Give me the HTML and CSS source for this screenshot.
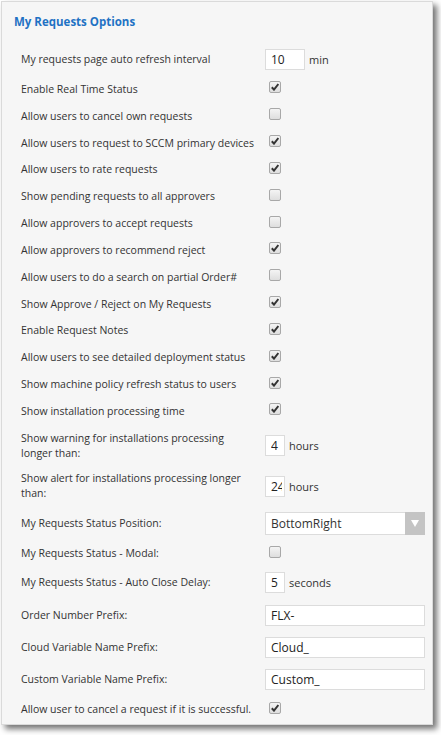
FILE: index.html
```html
<!DOCTYPE html>
<html>
<head>
<meta charset="utf-8">
<link rel="stylesheet" href="styles.css">
</head>
<body>
<div class="panel">
  <div class="title">My Requests Options</div>
  <div class="rows">
    <div class="row r1"><span class="label">My requests page auto refresh interval</span><span class="ctrl"><span class="input w40">10</span><span class="unit">min</span></span></div>
    <div class="row r"><span class="label">Enable Real Time Status</span><span class="ctrl"><span class="cb on"></span></span></div>
    <div class="row r"><span class="label">Allow users to cancel own requests</span><span class="ctrl"><span class="cb"></span></span></div>
    <div class="row r"><span class="label">Allow users to request to SCCM primary devices</span><span class="ctrl"><span class="cb on"></span></span></div>
    <div class="row r"><span class="label">Allow users to rate requests</span><span class="ctrl"><span class="cb on"></span></span></div>
    <div class="row r"><span class="label">Show pending requests to all approvers</span><span class="ctrl"><span class="cb"></span></span></div>
    <div class="row r"><span class="label">Allow approvers to accept requests</span><span class="ctrl"><span class="cb"></span></span></div>
    <div class="row r"><span class="label">Allow approvers to recommend reject</span><span class="ctrl"><span class="cb on"></span></span></div>
    <div class="row r"><span class="label">Allow users to do a search on partial Order#</span><span class="ctrl"><span class="cb"></span></span></div>
    <div class="row r"><span class="label">Show Approve / Reject on My Requests</span><span class="ctrl"><span class="cb on"></span></span></div>
    <div class="row r"><span class="label">Enable Request Notes</span><span class="ctrl"><span class="cb on"></span></span></div>
    <div class="row r"><span class="label">Allow users to see detailed deployment status</span><span class="ctrl"><span class="cb on"></span></span></div>
    <div class="row r"><span class="label">Show machine policy refresh status to users</span><span class="ctrl"><span class="cb on"></span></span></div>
    <div class="row r"><span class="label">Show installation processing time</span><span class="ctrl"><span class="cb on"></span></span></div>
    <div class="row r-warn"><span class="label two">Show warning for installations processing longer than:</span><span class="ctrl"><span class="input w20"><span class="clip">4</span></span><span class="unit">hours</span></span></div>
    <div class="row r-alert"><span class="label two">Show alert for installations processing longer than:</span><span class="ctrl"><span class="input w20"><span class="clip">24</span></span><span class="unit">hours</span></span></div>
    <div class="row r-pos"><span class="label">My Requests Status Position:</span><span class="ctrl"><span class="select"><span class="sel-text">BottomRight</span><span class="sel-arrow"><svg width="8" height="7" viewBox="0 0 8 7"><path d="M0 0H8L4 7Z" fill="#fff"/></svg></span></span></span></div>
    <div class="row r-modal"><span class="label">My Requests Status - Modal:</span><span class="ctrl"><span class="cb"></span></span></div>
    <div class="row r-close"><span class="label">My Requests Status - Auto Close Delay:</span><span class="ctrl"><span class="input w20"><span class="clip">5</span></span><span class="unit">seconds</span></span></div>
    <div class="row r-order"><span class="label">Order Number Prefix:</span><span class="ctrl"><span class="input wide">FLX-</span></span></div>
    <div class="row r-cloud"><span class="label">Cloud Variable Name Prefix:</span><span class="ctrl"><span class="input wide">Cloud_</span></span></div>
    <div class="row r-custom"><span class="label">Custom Variable Name Prefix:</span><span class="ctrl"><span class="input wide">Custom_</span></span></div>
    <div class="row r-allow"><span class="label">Allow user to cancel a request if it is successful.</span><span class="ctrl"><span class="cb on"></span></span></div>
  </div>
</div>
</body>
</html>
```
FILE: styles.css
```css
html, body {
  margin: 0;
  padding: 0;
  background: #ffffff;
}
body {
  font-family: "Open Sans", "Noto Sans", sans-serif;
  font-size: 10.5px;
  color: #333333;
  width: 441px;
  height: 735px;
  overflow: hidden;
}
.panel {
  margin: 1px 0 0 1px;
  width: 430px;
  height: 722px;
  background: #f6f6f6;
  border: 1px solid #dadada;
  box-shadow: 4px 4px 6px rgba(0, 0, 0, 0.55);
}
.title {
  height: 40px;
  padding: 12px 0 0 12px;
  box-sizing: border-box;
  font-weight: bold;
  font-size: 11.5px;
  color: #1f72c4;
}
.rows {
  display: flex;
  flex-direction: column;
}
.row {
  display: flex;
  align-items: center;
  padding-left: 19px;
}
.label {
  width: 244px;
  flex: none;
  line-height: 15px;
}
.label.two {
  width: 232px;
  margin-right: 12px;
}
.ctrl {
  display: flex;
  align-items: center;
}
.r1 { height: 34px; }
.r { height: 26.83px; }
.r-warn { height: 40px; margin-top: 1px; }
.r-alert { height: 41px; }
.r-pos { height: 33px; }
.r-modal { height: 28px; }
.r-close { height: 30px; }
.r-order { height: 35px; }
.r-cloud { height: 29px; }
.r-custom { height: 35px; }
.r-allow { height: 26px; }
.input {
  box-sizing: border-box;
  height: 21px;
  background: #ffffff;
  border: 1px solid #dcdcdc;
  font-size: 12px;
  line-height: 19px;
  padding-left: 5px;
  color: #222;
  overflow: hidden;
  white-space: nowrap;
}
.w40 { width: 40px; }
.w20 { width: 20px; padding-left: 5px; }
.clip {
  display: block;
  width: 11px;
  overflow: hidden;
}
.wide { width: 160px; }
.unit {
  margin-left: 4px;
  font-size: 11px;
}
.cb {
  box-sizing: border-box;
  width: 12px;
  height: 12px;
  margin: 0 0 4px 4px;
  border: 1px solid #a8a8a8;
  border-radius: 2px;
  background: linear-gradient(#f4f4f4, #dedede);
  position: relative;
}
.cb.on::after {
  content: "";
  position: absolute;
  left: 1px;
  top: 1px;
  width: 8px;
  height: 8px;
  background: url("data:image/svg+xml;utf8,<svg xmlns='http://www.w3.org/2000/svg' width='8' height='8' viewBox='0 0 8 8'><path d='M0.8 4.2 L3 6.6 L7.4 1' fill='none' stroke='%23333' stroke-width='2'/></svg>") no-repeat;
}
.select {
  box-sizing: border-box;
  width: 160px;
  height: 23px;
  background: #fff;
  border: 1px solid #dcdcdc;
  display: flex;
  align-items: center;
}
.sel-text {
  flex: 1;
  padding-left: 5px;
  font-size: 12px;
}
.sel-arrow {
  width: 20px;
  height: 23px;
  margin-right: -1px;
  background: #c4c4c4;
  display: flex;
  align-items: center;
  justify-content: center;
}
```
